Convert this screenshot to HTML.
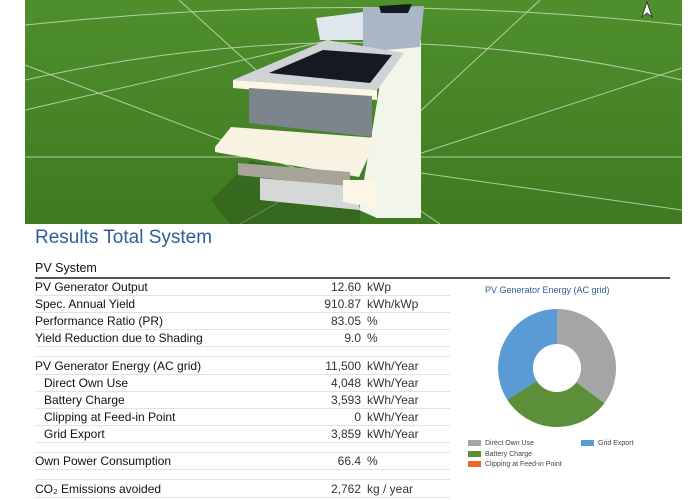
<!DOCTYPE html>
<html><head><meta charset="utf-8"><style>
body{margin:0;width:700px;height:500px;background:#fff;font-family:"Liberation Sans",sans-serif;position:relative;overflow:hidden}
.t{position:absolute;left:35px;font-size:12px;color:#111}
.row{position:absolute;left:35px;width:415px;height:17px;box-sizing:border-box;border-bottom:1px solid #e2e2e2;font-size:12px;line-height:16px;color:#111}
.row .v{position:absolute;left:230px;width:96px;text-align:right;top:0;color:#333}
.row .u{position:absolute;left:332px;top:0;color:#333}
.ind{padding-left:9px}
.lg{position:absolute;font-size:7px;color:#444}
.lg i{display:inline-block;width:13px;height:6px;margin-right:4px;vertical-align:-1px}
</style></head><body>
<svg style="position:absolute;left:0;top:0" width="700" height="224" viewBox="0 0 700 224">
<defs><linearGradient id="g" x1="0" y1="0" x2="0" y2="1"><stop offset="0" stop-color="#4f8f2c"/><stop offset="1" stop-color="#3f7a22"/></linearGradient>
<clipPath id="c"><rect x="25" y="0" width="657" height="224"/></clipPath></defs>
<g clip-path="url(#c)">
<rect x="25" width="657" height="224" fill="url(#g)"/>
<g stroke="#d6e6c8" stroke-width="1" fill="none" opacity="0.75">
<path d="M25 25 Q359 -10 682 25"/><path d="M25 80 Q359 5 682 80"/><path d="M25 157 L682 157"/>
<path d="M25 65 L300 170"/><path d="M25 110 L330 40"/><path d="M179 0 L300 110"/><path d="M540 0 L400 130"/><path d="M682 68 L400 160"/><path d="M682 210 L400 170"/><path d="M240 224 L300 190"/><path d="M440 224 L390 190"/>
</g>
<polygon points="211,200 251,160 360,190 360,224 230,224" fill="#2d5a1b" opacity="0.55"/>
<polygon points="379,45 421,40 421,218 377,218 359,210 379,90" fill="#f1f5ea"/>
<polygon points="316,18 363,12 363,40 320,40" fill="#dfe6ee"/>
<polygon points="363,8 424,6 420,47 363,52" fill="#a9b7c6"/>
<polygon points="379,6 412,4 408,13 381,13" fill="#151a22"/>
<polygon points="233,80 327,40 404,53 377,90" fill="#cfd3d6"/>
<polygon points="269,73 323,50 392,55 370,83" fill="#151922"/>
<polygon points="233,80 377,90 377,100 233,88" fill="#fbf6e6"/>
<polygon points="249,88 372,96 372,137 249,123" fill="#7b858b"/>
<polygon points="231,127 377,138 359,177 215,152 215,147" fill="#f8f2e2"/>
<polygon points="238,163 350,172 350,187 238,175" fill="#a8a49a"/>
<polygon points="260,178 359,187 359,210 260,200" fill="#d6d8d8"/>
<polygon points="343,180 377,180 377,208 343,202" fill="#fbf6e6"/>
<path d="M647 2 L652 17 L647 13 L642 17Z" fill="#fff" stroke="#222" stroke-width="0.8"/>
</g>
</svg>
<div style="position:absolute;left:35px;top:227px;font-size:19px;color:#2f5d9a">Results Total System</div>
<div class="t" style="top:261px;font-size:12.5px">PV System</div>
<div style="position:absolute;left:35px;top:277px;width:635px;height:2px;background:#555"></div>
<div class="row" style="top:279px">PV Generator Output<span class="v">12.60</span><span class="u">kWp</span></div>
<div class="row" style="top:296px">Spec. Annual Yield<span class="v">910.87</span><span class="u">kWh/kWp</span></div>
<div class="row" style="top:313px">Performance Ratio (PR)<span class="v">83.05</span><span class="u">%</span></div>
<div class="row" style="top:330px">Yield Reduction due to Shading<span class="v">9.0</span><span class="u">%</span></div>
<div class="row" style="top:347px;height:10px"></div>
<div class="row" style="top:358px">PV Generator Energy (AC grid)<span class="v">11,500</span><span class="u">kWh/Year</span></div>
<div class="row ind" style="top:375px">Direct Own Use<span class="v">4,048</span><span class="u">kWh/Year</span></div>
<div class="row ind" style="top:392px">Battery Charge<span class="v">3,593</span><span class="u">kWh/Year</span></div>
<div class="row ind" style="top:409px">Clipping at Feed-in Point<span class="v">0</span><span class="u">kWh/Year</span></div>
<div class="row ind" style="top:426px">Grid Export<span class="v">3,859</span><span class="u">kWh/Year</span></div>
<div class="row" style="top:443px;height:10px"></div>
<div class="row" style="top:453px">Own Power Consumption<span class="v">66.4</span><span class="u">%</span></div>
<div class="row" style="top:470px;height:10px"></div>
<div class="row" style="top:481px">CO₂ Emissions avoided<span class="v">2,762</span><span class="u">kg / year</span></div>
<div style="position:absolute;left:485px;top:285px;font-size:9px;color:#2f5d9a">PV Generator Energy (AC grid)</div>
<svg style="position:absolute;left:497px;top:308px" width="120" height="120" viewBox="-60 -60 120 120">
<path d="M0,-59 A59,59 0 0 1 47.4,35.2 L19.3,14.3 A24,24 0 0 0 0,-24Z" fill="#a5a5a5"/>
<path d="M47.4,35.2 A59,59 0 0 1 -49.8,31.6 L-20.3,12.9 A24,24 0 0 0 19.3,14.3Z" fill="#5b8f3a"/>
<path d="M-49.8,31.6 A59,59 0 0 1 0,-59 L0,-24 A24,24 0 0 0 -20.3,12.9Z" fill="#5b9bd5"/>
</svg>
<div class="lg" style="left:468px;top:440px"><i style="background:#a5a5a5"></i>Direct Own Use</div>
<div class="lg" style="left:581px;top:440px"><i style="background:#5b9bd5"></i>Grid Export</div>
<div class="lg" style="left:468px;top:451px"><i style="background:#5b8f3a"></i>Battery Charge</div>
<div class="lg" style="left:468px;top:461px"><i style="background:#f26522"></i>Clipping at Feed-in Point</div>
</body></html>
